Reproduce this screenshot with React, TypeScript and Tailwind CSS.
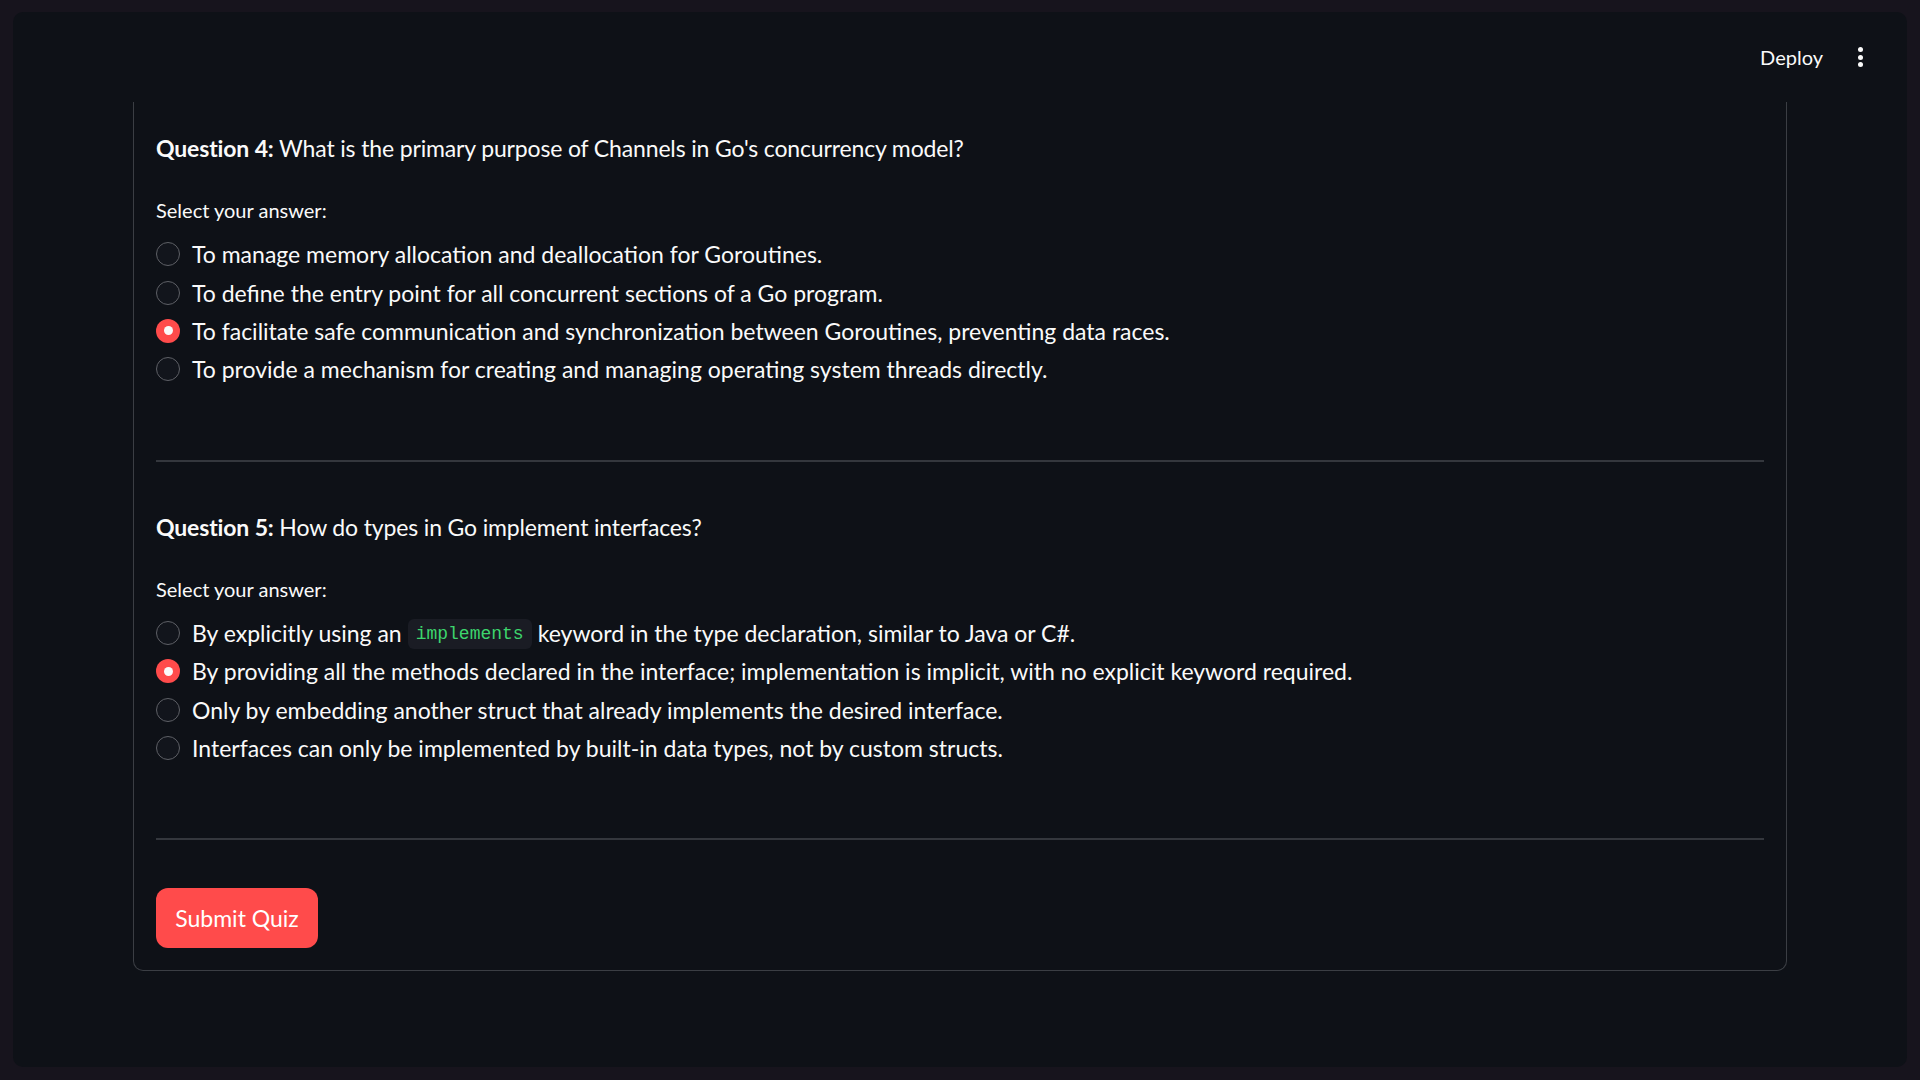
import React from "react";

type Option = { content: React.ReactNode };

type QuestionProps = {
  number: number;
  text: string;
  options: Option[];
  selected: number;
};

function Radio({ checked }: { checked: boolean }) {
  if (checked) {
    return (
      <span className="flex h-[24px] w-[24px] shrink-0 items-center justify-center rounded-full bg-[#ff4b4b]">
        <span className="h-[9px] w-[9px] rounded-full bg-[#fafafa]" />
      </span>
    );
  }
  return <span className="h-[24px] w-[24px] shrink-0 rounded-full border-[1.5px] border-[#5e6066] bg-[#12151c]" />;
}

function Question({ number, text, options, selected }: QuestionProps) {
  return (
    <div>
      <p className="h-[36px] text-[23px] leading-[36px] tracking-[-0.15px] text-[#fafafa]">
        <span className="font-bold">Question {number}:</span> {text}
      </p>
      <p className="mt-[29px] h-[30px] text-[20px] leading-[30px] text-[#fafafa]">Select your answer:</p>
      <div className="mt-[10px] flex flex-col">
        {options.map((o, i) => (
          <div key={i} className="flex h-[38.4px] items-center gap-[12px]">
            <Radio checked={i === selected} />
            <span className="flex items-center text-[23px] leading-[36px] text-[#fafafa]">{o.content}</span>
          </div>
        ))}
      </div>
      <div className="mt-[71px] h-[2px] w-[1608px] bg-[#34373d]" />
    </div>
  );
}

const q4: Option[] = [
  { content: "To manage memory allocation and deallocation for Goroutines." },
  { content: "To define the entry point for all concurrent sections of a Go program." },
  { content: "To facilitate safe communication and synchronization between Goroutines, preventing data races." },
  { content: "To provide a mechanism for creating and managing operating system threads directly." },
];

const q5: Option[] = [
  {
    content: (
      <>
        <span>By explicitly using an</span>
        <code className="ml-[6px] mr-[6px] mt-[2px] h-[30px] rounded-[6px] bg-[#1a1c24] px-[8px] font-['Liberation_Mono',monospace] text-[18px] leading-[31px] tracking-normal text-[#3dd56d]">
          implements
        </code>
        <span>keyword in the type declaration, similar to Java or C#.</span>
      </>
    ),
  },
  { content: "By providing all the methods declared in the interface; implementation is implicit, with no explicit keyword required." },
  { content: "Only by embedding another struct that already implements the desired interface." },
  { content: "Interfaces can only be implemented by built-in data types, not by custom structs." },
];

export default function App() {
  return (
    <div className="h-[1080px] w-full bg-[#17141d] pb-[13px] pl-[13px] pr-[13px] pt-[12px] font-['Lato',sans-serif]">
      <div className="flex h-full flex-col overflow-hidden rounded-[10px] bg-[#0e1117]">
        <header className="flex h-[90px] shrink-0 items-center justify-end pr-[44px]">
          <span className="text-[20px] text-[#fafafa]">Deploy</span>
          <span className="ml-[35px] flex flex-col items-center gap-[2.5px]">
            <span className="h-[5px] w-[5px] rounded-full bg-[#fafafa]" />
            <span className="h-[5px] w-[5px] rounded-full bg-[#fafafa]" />
            <span className="h-[5px] w-[5px] rounded-full bg-[#fafafa]" />
          </span>
        </header>
        <main className="pl-[120px]">
          <div className="w-[1654px] rounded-b-[10px] border-x border-b border-[#3b3e44] pb-[22px] pl-[22px] pt-[28px]">
            <div className="flex flex-col gap-[47px]">
              <Question
                number={4}
                text="What is the primary purpose of Channels in Go's concurrency model?"
                options={q4}
                selected={2}
              />
              <Question number={5} text="How do types in Go implement interfaces?" options={q5} selected={1} />
            </div>
            <button className="mt-[48px] h-[60px] w-[162px] rounded-[12px] bg-[#ff4b4b] text-[23px] text-white">
              Submit Quiz
            </button>
          </div>
        </main>
      </div>
    </div>
  );
}
